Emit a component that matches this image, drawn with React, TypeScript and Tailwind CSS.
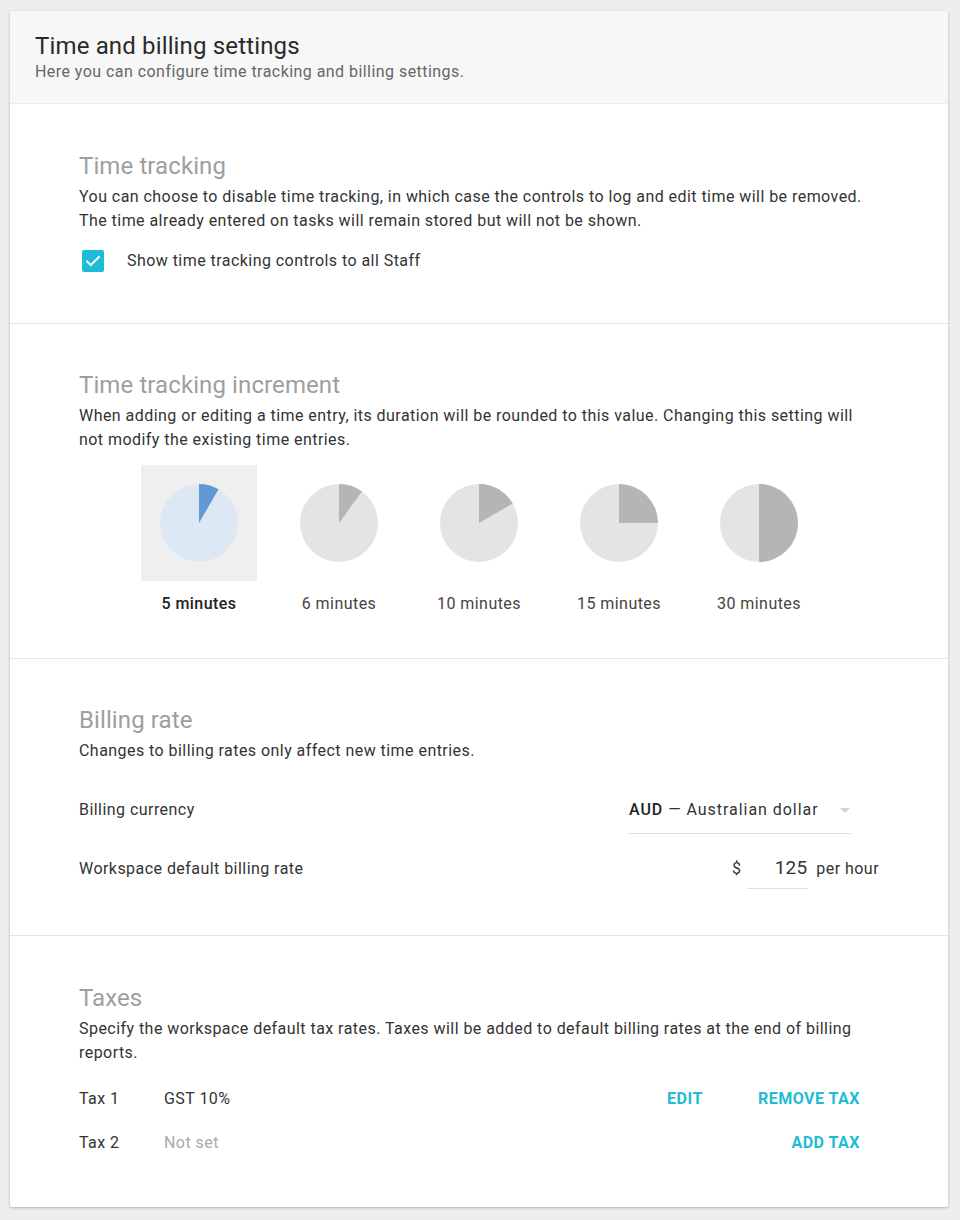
import React from "react";

const INCREMENTS = [
  { minutes: 5, label: "5 minutes" },
  { minutes: 6, label: "6 minutes" },
  { minutes: 10, label: "10 minutes" },
  { minutes: 15, label: "15 minutes" },
  { minutes: 30, label: "30 minutes" },
];

function slicePath(minutes: number, r: number) {
  const a = (minutes / 60) * Math.PI * 2;
  const x = r + r * Math.sin(a);
  const y = r - r * Math.cos(a);
  const large = minutes > 30 ? 1 : 0;
  return `M${r} ${r} L${r} 0 A${r} ${r} 0 ${large} 1 ${x.toFixed(3)} ${y.toFixed(3)} Z`;
}

function Pie({ minutes, active }: { minutes: number; active: boolean }) {
  const r = 39;
  return (
    <svg width={r * 2} height={r * 2} viewBox={`0 0 ${r * 2} ${r * 2}`}>
      <circle cx={r} cy={r} r={r} fill={active ? "#dce8f3" : "#e4e4e4"} />
      <path d={slicePath(minutes, r)} fill={active ? "#6199d2" : "#b5b5b5"} />
    </svg>
  );
}

function SectionHeading({ title, children }: { title: string; children: React.ReactNode }) {
  return (
    <>
      <h2 className="text-[24px] leading-[32px] tracking-[0.1px] text-[#9e9e9e]">{title}</h2>
      <p className="mt-[3px] text-[16px] leading-[24px] text-[#333]">{children}</p>
    </>
  );
}

export default function App() {
  const selected = 5;

  return (
    <div
      className="min-h-[1220px] bg-[#eeeeee] pt-[11px] pl-[10px] pr-[12px] pb-[13px] tracking-[0.45px]"
      style={{ fontFamily: "Roboto, 'Liberation Sans', sans-serif" }}
    >
      <div className="bg-white rounded-[2px] shadow-[0_1px_3px_rgba(0,0,0,0.25)] overflow-hidden">
        {/* Header */}
        <div className="bg-[#f7f7f7] h-[93px] pl-[25px] pt-[20px] border-b border-[#ececec]">
          <h1 className="text-[24px] leading-[30px] tracking-[0.15px] text-[#2a2a2a]">Time and billing settings</h1>
          <p className="text-[16px] leading-[22px] text-[#666]">Here you can configure time tracking and billing settings.</p>
        </div>

        {/* Time tracking */}
        <section className="px-[69px] pt-[46px] pb-[50px] border-b border-[#e5e5e5]">
          <SectionHeading title="Time tracking">
            You can choose to disable time tracking, in which case the controls to log and edit time will be removed.
            <br />
            The time already entered on tasks will remain stored but will not be shown.
          </SectionHeading>
          <label className="mt-[16px] flex items-center h-[24px]">
            <span className="ml-[3px] w-[22px] h-[22px] rounded-[2px] bg-[#1fbcd7] flex items-center justify-center">
              <svg width="18" height="18" viewBox="0 0 24 24" fill="none" stroke="white" strokeWidth="2.8" strokeLinecap="round" strokeLinejoin="round">
                <path d="M4 12.5l5 5L20 6.5" />
              </svg>
            </span>
            <span className="ml-[23px] text-[16px] text-[#333]">Show time tracking controls to all Staff</span>
          </label>
        </section>

        {/* Increment */}
        <section className="px-[69px] pt-[45px] pb-[42px] border-b border-[#e5e5e5]">
          <SectionHeading title="Time tracking increment">
            When adding or editing a time entry, its duration will be rounded to this value. Changing this setting will not modify the existing time entries.
          </SectionHeading>
          <div className="mt-[13px] flex justify-center gap-[24px]">
            {INCREMENTS.map(inc => {
              const active = inc.minutes === selected;
              return (
                <div key={inc.minutes} className="w-[116px] flex flex-col items-center">
                  <div className={`w-[116px] h-[116px] flex items-center justify-center ${active ? "bg-[#efefef]" : ""}`}>
                    <Pie minutes={inc.minutes} active={active} />
                  </div>
                  <div className={`mt-[11px] text-[16px] leading-[24px] ${active ? "font-medium text-[#222]" : "text-[#444]"}`}>
                    {inc.label}
                  </div>
                </div>
              );
            })}
          </div>
        </section>

        {/* Billing rate */}
        <section className="px-[69px] pt-[45px] pb-[46px] border-b border-[#e5e5e5]">
          <SectionHeading title="Billing rate">Changes to billing rates only affect new time entries.</SectionHeading>
          <div className="mt-[23px] h-[48px] flex items-center justify-between">
            <span className="text-[16px] text-[#333]">Billing currency</span>
            <div className="mr-[28px] w-[223px] h-[48px] flex items-center justify-between border-b border-[#e0e0e0] pl-[1px]">
              <span className="text-[16px] text-[#333] tracking-[0.95px]">
                <span className="font-medium text-[#222]">AUD</span> — Australian dollar
              </span>
              <svg width="10" height="5" viewBox="0 0 10 5" className="mr-[1px] mt-[1px]">
                <path d="M0 0h10L5 5z" fill="#d4d4d4" />
              </svg>
            </div>
          </div>
          <div className="mt-[15px] h-[40px] flex items-center justify-between">
            <span className="text-[16px] text-[#333]">Workspace default billing rate</span>
            <div className="flex items-center h-[40px]">
              <span className="text-[16px] text-[#333]">$</span>
              <div className="ml-[6px] w-[61px] h-[40px] flex items-center justify-end border-b border-[#e0e0e0] pr-[1px]">
                <span className="text-[19px] text-[#333] tracking-[0.2px]">125</span>
              </div>
              <span className="ml-[8px] text-[16px] text-[#333]">per hour</span>
            </div>
          </div>
        </section>

        {/* Taxes */}
        <section className="px-[69px] pt-[46px] pb-[42px]">
          <SectionHeading title="Taxes">
            Specify the workspace default tax rates. Taxes will be added to default billing rates at the end of billing reports.
          </SectionHeading>
          <div className="mt-[12px]">
            <div className="h-[44px] flex items-center text-[16px]">
              <span className="w-[85px] text-[#333]">Tax 1</span>
              <span className="text-[#333]">GST 10%</span>
              <div className="ml-auto mr-[19px] flex items-center gap-[55px] font-bold text-[#1fbcd2] tracking-[0.5px]">
                <button>EDIT</button>
                <button>REMOVE TAX</button>
              </div>
            </div>
            <div className="h-[44px] flex items-center text-[16px]">
              <span className="w-[85px] text-[#333]">Tax 2</span>
              <span className="text-[#aaa]">Not set</span>
              <div className="ml-auto mr-[19px] font-bold text-[#1fbcd2] tracking-[0.5px]">
                <button>ADD TAX</button>
              </div>
            </div>
          </div>
        </section>
      </div>
    </div>
  );
}
